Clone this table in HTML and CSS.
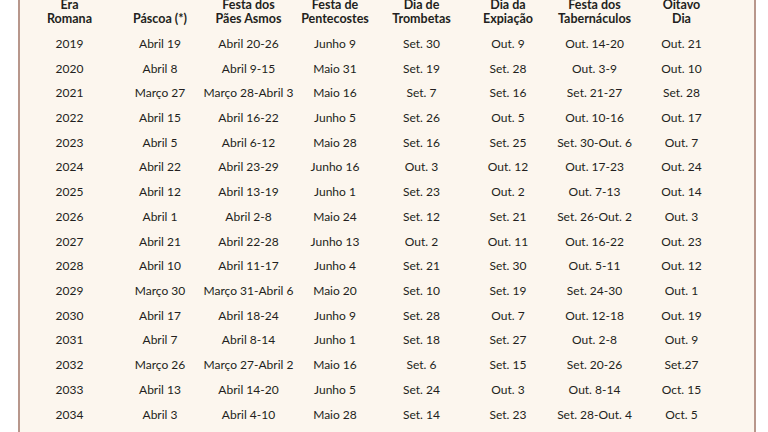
FILE: index.html
```html
<!DOCTYPE html>
<html lang="pt">
<head>
<meta charset="utf-8">
<link rel="stylesheet" href="styles.css">
<title>Tabela</title>
</head>
<body>
<div class="panel">
  <div class="grid">
    <div class="h">Era<br>Romana</div>
    <div class="h">Páscoa (*)</div>
    <div class="h">Festa dos<br>Pães Asmos</div>
    <div class="h">Festa de<br>Pentecostes</div>
    <div class="h">Dia de<br>Trombetas</div>
    <div class="h">Dia da<br>Expiação</div>
    <div class="h">Festa dos<br>Tabernáculos</div>
    <div class="h">Oitavo<br>Dia</div>

    <div>2019</div><div>Abril 19</div><div>Abril 20-26</div><div>Junho 9</div><div>Set. 30</div><div>Out. 9</div><div>Out. 14-20</div><div>Out. 21</div>
    <div>2020</div><div>Abril 8</div><div>Abril 9-15</div><div>Maio 31</div><div>Set. 19</div><div>Set. 28</div><div>Out. 3-9</div><div>Out. 10</div>
    <div>2021</div><div>Março 27</div><div>Março 28-Abril 3</div><div>Maio 16</div><div>Set. 7</div><div>Set. 16</div><div>Set. 21-27</div><div>Set. 28</div>
    <div>2022</div><div>Abril 15</div><div>Abril 16-22</div><div>Junho 5</div><div>Set. 26</div><div>Out. 5</div><div>Out. 10-16</div><div>Out. 17</div>
    <div>2023</div><div>Abril 5</div><div>Abril 6-12</div><div>Maio 28</div><div>Set. 16</div><div>Set. 25</div><div>Set. 30-Out. 6</div><div>Out. 7</div>
    <div>2024</div><div>Abril 22</div><div>Abril 23-29</div><div>Junho 16</div><div>Out. 3</div><div>Out. 12</div><div>Out. 17-23</div><div>Out. 24</div>
    <div>2025</div><div>Abril 12</div><div>Abril 13-19</div><div>Junho 1</div><div>Set. 23</div><div>Out. 2</div><div>Out. 7-13</div><div>Out. 14</div>
    <div>2026</div><div>Abril 1</div><div>Abril 2-8</div><div>Maio 24</div><div>Set. 12</div><div>Set. 21</div><div>Set. 26-Out. 2</div><div>Out. 3</div>
    <div>2027</div><div>Abril 21</div><div>Abril 22-28</div><div>Junho 13</div><div>Out. 2</div><div>Out. 11</div><div>Out. 16-22</div><div>Out. 23</div>
    <div>2028</div><div>Abril 10</div><div>Abril 11-17</div><div>Junho 4</div><div>Set. 21</div><div>Set. 30</div><div>Out. 5-11</div><div>Out. 12</div>
    <div>2029</div><div>Março 30</div><div>Março 31-Abril 6</div><div>Maio 20</div><div>Set. 10</div><div>Set. 19</div><div>Set. 24-30</div><div>Out. 1</div>
    <div>2030</div><div>Abril 17</div><div>Abril 18-24</div><div>Junho 9</div><div>Set. 28</div><div>Out. 7</div><div>Out. 12-18</div><div>Out. 19</div>
    <div>2031</div><div>Abril 7</div><div>Abril 8-14</div><div>Junho 1</div><div>Set. 18</div><div>Set. 27</div><div>Out. 2-8</div><div>Out. 9</div>
    <div>2032</div><div>Março 26</div><div>Março 27-Abril 2</div><div>Maio 16</div><div>Set. 6</div><div>Set. 15</div><div>Set. 20-26</div><div>Set.27</div>
    <div>2033</div><div>Abril 13</div><div>Abril 14-20</div><div>Junho 5</div><div>Set. 24</div><div>Out. 3</div><div>Out. 8-14</div><div>Oct. 15</div>
    <div>2034</div><div>Abril 3</div><div>Abril 4-10</div><div>Maio 28</div><div>Set. 14</div><div>Set. 23</div><div>Set. 28-Out. 4</div><div>Oct. 5</div>
  </div>
</div>
</body>
</html>
```

FILE: styles.css
```css
html, body {
  margin: 0;
  padding: 0;
  background: #ffffff;
  height: 432px;
  overflow: hidden;
}
.panel {
  margin: 0 0 0 18px;
  width: 730px;
  height: 460px;
  background: #fcf6ee;
  border-left: 2px solid #b8978c;
  border-right: 2px solid #b8978c;
  padding-left: 4px;
  box-sizing: content-box;
}
.grid {
  display: grid;
  grid-template-columns: 91px 90px 87px 86px 87px 86px 87px 87px;
  grid-template-rows: 31px;
  grid-auto-rows: 24.73px;
  font-family: "Lato", "Liberation Sans", sans-serif;
  font-size: 12px;
  color: #231f20;
  text-align: center;
}
.grid > div {
  display: flex;
  align-items: center;
  justify-content: center;
  white-space: nowrap;
}
.grid > .h {
  font-weight: bold;
  font-size: 12.5px;
  line-height: 13.3px;
  align-items: flex-end;
  padding-bottom: 6px;
}
```
